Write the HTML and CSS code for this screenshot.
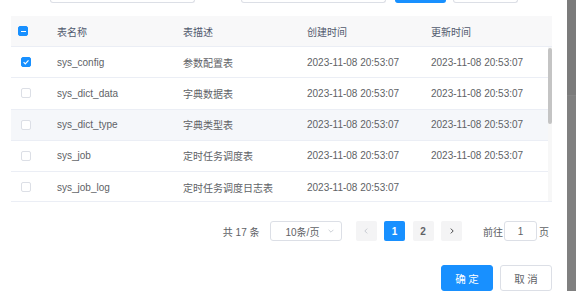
FILE: index.html
```html
<!DOCTYPE html>
<html lang="zh">
<head>
<meta charset="utf-8">
<link rel="stylesheet" href="styles.css">
</head>
<body>
<div class="page">
  <div class="dialog">
    <div class="toolbar">
      <div class="tb-input tb-a"></div>
      <div class="tb-input tb-b"></div>
      <div class="tb-btn-primary"></div>
      <div class="tb-btn"></div>
    </div>

    <div class="table">
      <div class="thead">
        <div class="cell cell-check head-check"><span class="cb cb-indeterminate"></span></div>
        <div class="cell">表名称</div>
        <div class="cell">表描述</div>
        <div class="cell">创建时间</div>
        <div class="cell">更新时间</div>
      </div>
      <div class="tbody-wrap">
        <div class="tbody">
          <div class="row">
            <div class="cell cell-check"><span class="cb cb-checked"><svg viewBox="0 0 10 10" width="10" height="10"><path d="M2.6 5.1 L4.3 6.8 L7.5 3.4" fill="none" stroke="#fff" stroke-width="1.2"/></svg></span></div>
            <div class="cell">sys_config</div>
            <div class="cell">参数配置表</div>
            <div class="cell">2023-11-08 20:53:07</div>
            <div class="cell">2023-11-08 20:53:07</div>
          </div>
          <div class="row">
            <div class="cell cell-check"><span class="cb"></span></div>
            <div class="cell">sys_dict_data</div>
            <div class="cell">字典数据表</div>
            <div class="cell">2023-11-08 20:53:07</div>
            <div class="cell">2023-11-08 20:53:07</div>
          </div>
          <div class="row row-hover">
            <div class="cell cell-check"><span class="cb"></span></div>
            <div class="cell">sys_dict_type</div>
            <div class="cell">字典类型表</div>
            <div class="cell">2023-11-08 20:53:07</div>
            <div class="cell">2023-11-08 20:53:07</div>
          </div>
          <div class="row">
            <div class="cell cell-check"><span class="cb"></span></div>
            <div class="cell">sys_job</div>
            <div class="cell">定时任务调度表</div>
            <div class="cell">2023-11-08 20:53:07</div>
            <div class="cell">2023-11-08 20:53:07</div>
          </div>
          <div class="row">
            <div class="cell cell-check"><span class="cb"></span></div>
            <div class="cell">sys_job_log</div>
            <div class="cell">定时任务调度日志表</div>
            <div class="cell">2023-11-08 20:53:07</div>
            <div class="cell"></div>
          </div>
        </div>
        <div class="gutter"><div class="thumb"></div></div>
      </div>
    </div>

    <div class="pager">
      <span class="total">共 17 条</span>
      <div class="sizes">
        <span>10条/页</span>
        <svg class="chev" viewBox="0 0 10 10" width="8" height="8"><path d="M2 3.5 L5 6.5 L8 3.5" fill="none" stroke="#c0c4cc" stroke-width="1"/></svg>
      </div>
      <div class="pages">
        <span class="pbtn pbtn-disabled"><svg viewBox="0 0 10 10" width="8" height="8"><path d="M6.5 2 L3.5 5 L6.5 8" fill="none" stroke="#c0c4cc" stroke-width="1.1"/></svg></span>
        <span class="pbtn pbtn-active">1</span>
        <span class="pbtn">2</span>
        <span class="pbtn"><svg viewBox="0 0 10 10" width="8" height="8"><path d="M3.5 2 L6.5 5 L3.5 8" fill="none" stroke="#303133" stroke-width="1.1"/></svg></span>
      </div>
      <div class="jump">
        <span>前往</span>
        <span class="jump-input">1</span>
        <span>页</span>
      </div>
    </div>

    <div class="footer">
      <button class="btn btn-primary">确定</button>
      <button class="btn">取消</button>
    </div>
  </div>
  <div class="overlay">
    <div class="overlay-top"></div>
    <div class="overlay-bottom"></div>
  </div>
</div>
</body>
</html>
```

FILE: styles.css
```css
* { box-sizing: border-box; }
html, body { margin: 0; padding: 0; }
body {
  font-family: "Liberation Sans", "Noto Sans CJK SC", sans-serif;
  font-size: 10px;
  color: #606266;
  background: #fff;
}
.page {
  display: flex;
  width: 576px;
  height: 291px;
  overflow: hidden;
}
.dialog {
  width: 567px;
  height: 291px;
  background: #fff;
  display: flex;
  flex-direction: column;
}
.overlay {
  width: 9px;
  display: flex;
  flex-direction: column;
}
.overlay-top { height: 96px; background: #7b7b7b; border-bottom: 1px solid #858585; }
.overlay-bottom { flex: 1; background: #808080; }

/* toolbar remnants */
.toolbar {
  height: 16px;
  display: flex;
  align-items: flex-start;
}
.tb-input, .tb-btn, .tb-btn-primary {
  height: 3px;
  border: 1px solid #dcdfe6;
  border-top: none;
  border-radius: 0 0 3px 3px;
}
.tb-a { margin-left: 50px; width: 145px; }
.tb-b { margin-left: 46px; width: 145px; }
.tb-btn-primary { margin-left: 9px; width: 51px; background: #1890ff; border-color: #1890ff; }
.tb-btn { margin-left: 7px; width: 65px; }

/* table */
.table {
  margin-left: 11px;
  width: 541px;
}
.thead {
  display: grid;
  grid-template-columns: 36px 126px 124px 124px 131px;
  height: 31px;
  background: #f8f8f9;
  border-bottom: 1px solid #ebeef5;
  color: #515a6e;
  font-weight: normal;
}
.cell {
  display: flex;
  align-items: center;
  padding-left: 10px;
  white-space: nowrap;
  overflow: hidden;
}
.cell-check { padding-left: 10px; }
.head-check { padding-left: 7px; }
.tbody-wrap {
  display: flex;
  height: 155px;
  overflow: hidden;
  border-bottom: 1px solid #ebeef5;
}
.tbody {
  width: 537px;
}
.row {
  display: grid;
  grid-template-columns: 36px 126px 124px 124px 127px;
  height: 31.25px;
  border-bottom: 1px solid #ebeef5;
}
.row-hover { background: #f5f7fa; }
.gutter {
  width: 4px;
  background: #f7f7f7;
  padding-top: 1px;
}
.thumb {
  height: 76px;
  background: #c4c4c4;
  border-radius: 2px;
}

/* checkbox */
.cb {
  display: inline-block;
  width: 10px;
  height: 10px;
  border: 1px solid #dcdfe6;
  border-radius: 2px;
  background: #fff;
  position: relative;
}
.cb-checked, .cb-indeterminate {
  background: #1890ff;
  border-color: #1890ff;
}
.cb-checked svg { position: absolute; left: -1px; top: -1px; }
.cb-indeterminate::after {
  content: "";
  position: absolute;
  left: 1.5px;
  right: 1.5px;
  top: 3.5px;
  height: 1px;
  background: #fff;
}

/* pager */
.pager {
  display: flex;
  align-items: center;
  justify-content: flex-end;
  height: 20px;
  margin-top: 19px;
  padding-right: 18px;
  color: #606266;
}
.total { margin-right: 10px; }
.sizes {
  width: 72px;
  height: 20px;
  border: 1px solid #dcdfe6;
  border-radius: 3px;
  display: flex;
  align-items: center;
  justify-content: space-between;
  padding: 0 6px 0 15px;
  margin-right: 14px;
}
.pages {
  display: flex;
  gap: 7.5px;
  margin-right: 21px;
}
.pbtn {
  width: 21px;
  height: 20px;
  background: #f4f4f5;
  border-radius: 2px;
  display: flex;
  align-items: center;
  justify-content: center;
  font-weight: bold;
  color: #606266;
}
.pbtn-active { background: #1890ff; color: #fff; }
.jump {
  display: flex;
  align-items: center;
  gap: 1px;
}
.jump-input {
  width: 33px;
  height: 20px;
  border: 1px solid #dcdfe6;
  border-radius: 3px;
  display: flex;
  align-items: center;
  justify-content: center;
  margin-right: 1px;
}

/* footer */
.footer {
  display: flex;
  justify-content: flex-end;
  gap: 7px;
  margin-top: 24px;
  padding-right: 15px;
}
.btn {
  width: 52px;
  height: 26px;
  border: 1px solid #dcdfe6;
  border-radius: 3px;
  background: #fff;
  color: #606266;
  font-family: "Liberation Sans", "Noto Sans CJK SC", sans-serif;
  font-size: 10.5px;
  letter-spacing: 2.5px;
  padding: 0 0 0 2.5px;
}
.btn-primary {
  background: #1890ff;
  border-color: #1890ff;
  color: #fff;
}
```
